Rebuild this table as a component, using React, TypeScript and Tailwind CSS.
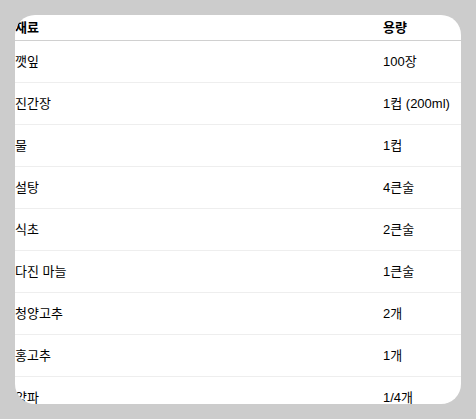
import React from "react";

const rows: [string, string][] = [
  ["깻잎", "100장"],
  ["진간장", "1컵 (200ml)"],
  ["물", "1컵"],
  ["설탕", "4큰술"],
  ["식초", "2큰술"],
  ["다진 마늘", "1큰술"],
  ["청양고추", "2개"],
  ["홍고추", "1개"],
  ["양파", "1/4개"],
];

export default function App() {
  return (
    <div
      className="w-full h-[419px] bg-[#cccccc] pt-[15px] pl-[15px]"
      style={{ fontFamily: '"Liberation Sans", "Noto Sans CJK KR", sans-serif' }}
    >
      <div className="w-[446px] h-[389px] rounded-[20px] bg-white overflow-hidden text-[13px] leading-[17px] text-black">
        <div className="flex border-b border-[#d0d0d0] pt-[4px] pb-[4px] font-bold">
          <div className="w-[368px]">재료</div>
          <div>용량</div>
        </div>
        {rows.map(([a, b]) => (
          <div key={a} className="flex border-b border-[#eeeeee] pt-[12px] pb-[12px]">
            <div className="w-[368px]">{a}</div>
            <div>{b}</div>
          </div>
        ))}
      </div>
    </div>
  );
}
